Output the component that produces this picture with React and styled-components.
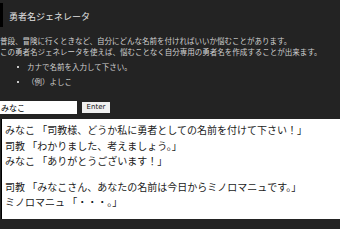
import React from "react";
import styled, { createGlobalStyle } from "styled-components";

const Global = createGlobalStyle`
  html, body { margin: 0; padding: 0; background: #232323; }
  body { font-family: "Noto Sans CJK JP", "DejaVu Sans", sans-serif; color: #d8d8d8; }
`;

const Page = styled.div`
  width: 340px;
  height: 229px;
  overflow: hidden;
  padding-top: 3px;
  box-sizing: border-box;
`;

const Header = styled.h1`
  margin: 0;
  height: 24px;
  border-left: 3px solid #000;
  padding-left: 6px;
  font-size: 9px;
  font-weight: normal;
  line-height: 27px;
  color: #e0e0e0;
  white-space: nowrap;
`;

const Intro = styled.p`
  margin: 8px 0 0;
  font-size: 7.5px;
  line-height: 11px;
  color: #d0d0d0;
  white-space: nowrap;
`;

const List = styled.ul`
  margin: 2px 0 0;
  padding: 0 0 0 27px;
  list-style: none;
`;

const Item = styled.li`
  position: relative;
  font-size: 7.5px;
  line-height: 15px;
  color: #d0d0d0;
  &::before {
    content: "";
    position: absolute;
    left: -10px;
    top: 7px;
    width: 2px;
    height: 2px;
    background: #c8c8c8;
  }
`;

const Form = styled.div`
  display: flex;
  align-items: center;
  gap: 5px;
  margin-top: 12px;
  height: 13px;
`;

const Input = styled.input`
  width: 77px;
  height: 13px;
  box-sizing: border-box;
  border: none;
  padding: 0 1px;
  margin: 0;
  background: #fff;
  color: #000;
  font-family: "Noto Sans CJK JP", sans-serif;
  font-size: 8px;
  outline: none;
`;

const Button = styled.button`
  width: 28px;
  height: 11px;
  box-sizing: border-box;
  border: none;
  padding: 0;
  margin: 0;
  background: #efefef;
  color: #111;
  font-family: "DejaVu Sans", sans-serif;
  font-size: 7px;
  line-height: 11px;
`;

const Dialog = styled.div`
  margin: 5px 0 0 1px;
  height: 100px;
  box-sizing: border-box;
  background: #fff;
  border-left: 1px solid #000;
  padding: 3px 0 0 3px;
  color: #1a1a1a;
  font-size: 10px;
  line-height: 15.5px;
`;

const Line = styled.div`
  white-space: nowrap;
`;

const Gap = styled.div`
  height: 10px;
`;

export default function App() {
  return (
    <>
      <Global />
      <Page>
        <Header>勇者名ジェネレータ</Header>
        <Intro>
          普段、冒険に行くときなど、自分にどんな名前を付ければいいか悩むことがあります。
          <br />
          この勇者名ジェネレータを使えば、悩むことなく自分専用の勇者名を作成することが出来ます。
        </Intro>
        <List>
          <Item>カナで名前を入力して下さい。</Item>
          <Item>（例）よしこ</Item>
        </List>
        <Form>
          <Input defaultValue="みなこ" />
          <Button>Enter</Button>
        </Form>
        <Dialog>
          <Line>みなこ 「司教様、どうか私に勇者としての名前を付けて下さい！」</Line>
          <Line>司教 「わかりました、考えましょう。」</Line>
          <Line>みなこ 「ありがとうございます！」</Line>
          <Gap />
          <Line>司教 「みなこさん、あなたの名前は今日からミノロマニュです。」</Line>
          <Line>ミノロマニュ 「・・・。」</Line>
        </Dialog>
      </Page>
    </>
  );
}
